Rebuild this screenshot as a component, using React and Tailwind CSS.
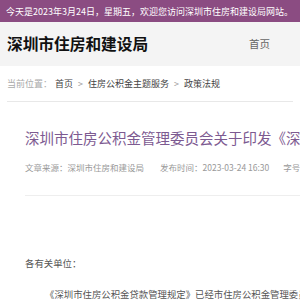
export default function App() {
  const font = { fontFamily: '"Noto Sans CJK SC", "Liberation Sans", sans-serif' };
  return (
    <div className="w-[300px] h-[300px] overflow-hidden bg-white" style={font}>
      {/* top welcome bar */}
      <div className="h-[22px] bg-[#8b4c82] flex items-center pl-[6px] whitespace-nowrap">
        <span className="text-[9px] text-white leading-none">
          今天是2023年3月24日，星期五，欢迎您访问深圳市住房和建设局网站。
        </span>
      </div>

      {/* header */}
      <div className="h-[44px] bg-[#f4f4f4] flex items-center justify-between pl-[7px] pr-[30px]">
        <h1 className="text-[15.7px] font-bold text-[#111] leading-none whitespace-nowrap">深圳市住房和建设局</h1>
        <a className="text-[10.5px] text-[#666]">首页</a>
      </div>

      {/* breadcrumb */}
      <div className="mx-[7px] h-[36px] flex items-center border-b border-[#e8e8e8] whitespace-nowrap text-[9px] leading-none">
        <span className="text-[#aaa]">当前位置：</span>
        <span className="ml-[3px] text-[#444]">首页</span>
        <span className="mx-[5px] text-[#999]">&gt;</span>
        <span className="text-[#444]">住房公积金主题服务</span>
        <span className="mx-[5px] text-[#999]">&gt;</span>
        <span className="text-[#444]">政策法规</span>
      </div>

      {/* article */}
      <div className="pl-[25px]">
        <h2 className="mt-[29px] text-[14.5px] text-[#7d5a91] leading-none whitespace-nowrap">
          深圳市住房公积金管理委员会关于印发《深圳市住房公积金贷款管理规定》的通知
        </h2>
        <div className="mt-[17px] flex text-[8.5px] text-[#999] leading-none whitespace-nowrap">
          <span>文章来源：深圳市住房和建设局</span>
          <span className="ml-[16px]">发布时间：2023-03-24 16:30</span>
          <span className="ml-[14px]">字号</span>
        </div>
        <div className="mt-[24px] border-t border-[#eee]"></div>

        <p className="mt-[63px] text-[9.4px] text-[#555] leading-none whitespace-nowrap">各有关单位：</p>
        <p className="mt-[22px] text-[9.4px] text-[#555] leading-none whitespace-nowrap indent-[20px]">
          《深圳市住房公积金贷款管理规定》已经市住房公积金管理委员会审议通过，现予印发，请遵照执行。
        </p>
      </div>
    </div>
  );
}
